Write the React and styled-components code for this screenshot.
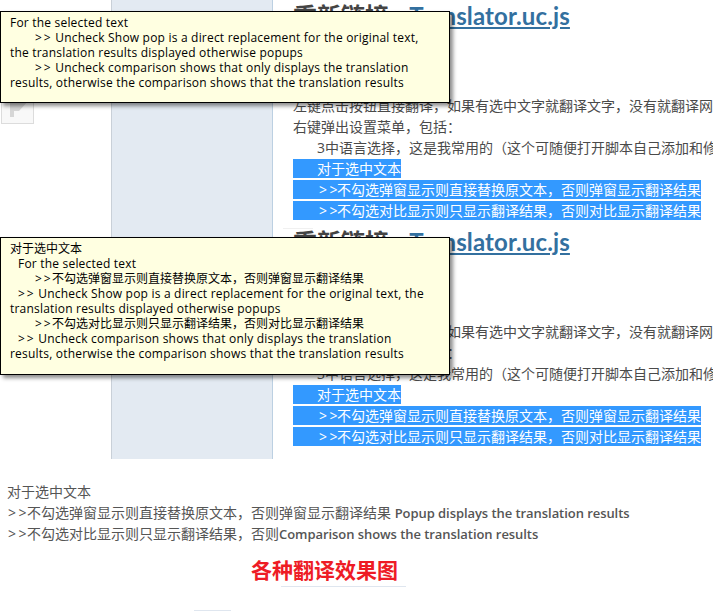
import React from 'react';
import styled, { createGlobalStyle } from 'styled-components';

const Global = createGlobalStyle`
  html, body { margin: 0; padding: 0; background: #fff; }
  body {
    width: 713px;
    height: 613px;
    overflow: hidden;
    font-family: "Open Sans", "Noto Sans CJK SC", sans-serif;
    font-size: 14px;
    color: #4a4a4a;
  }
`;

const Page = styled.div`
  position: relative;
  width: 713px;
  height: 613px;
  overflow: hidden;
`;

const Shot = styled.div`
  display: flex;
  height: 459px;
`;

const Gutter = styled.div`
  width: 111px;
  flex-shrink: 0;
  padding-top: 100px;
`;

const ShareBox = styled.div`
  width: 31px;
  height: 23px;
  margin-left: 1px;
  border: 1px solid #dcdcdc;
  border-top: none;
  background: #f8f8f8;
  color: #d6d6d6;
`;

const Sidebar = styled.div`
  width: 160px;
  flex-shrink: 0;
  background: #e3eaf2;
  border-left: 1px solid #c9d0d8;
  border-right: 1px solid #bcd0e2;
`;

const Content = styled.div`
  flex: 1;
  min-width: 0;
  padding-left: 20px;
  white-space: nowrap;
  overflow: hidden;
`;

const Post = styled.div`
  height: 226px;
`;

const Title = styled.h2`
  position: relative;
  margin: 0;
  line-height: 31px;
  font-size: 24px;
  font-weight: 700;
  color: #444;
  ${props => props.$faint && `
    &::before {
      content: "";
      position: absolute;
      left: -10px;
      top: 2px;
      width: 30px;
      height: 1px;
      background: #f0f0f0;
    }
  `}
`;

const TitleLink = styled.a`
  font-family: Lato, sans-serif;
  letter-spacing: 0.12px;
  color: #33709f;
  text-decoration: underline;
`;

const Body = styled.div`
  padding-top: 64px;
`;

const Line = styled.div`
  height: 21px;
  line-height: 21px;
  padding-left: ${props => (props.$indent ? '24px' : '0')};
`;

const PickedRows = styled.div`
  padding-top: 1px;
`;

const Picked = styled.div`
  width: ${props => (props.$short ? '108px' : '408px')};
  height: 19px;
  margin-bottom: 2px;
  line-height: 19px;
  padding-left: 24px;
  box-sizing: border-box;
  background: #3399ff;
  color: #fff;
`;

const Chevrons = styled.span`
  display: inline-block;
  box-sizing: border-box;
  width: ${props => props.$width}px;
  padding-left: ${props => props.$inset || 0}px;
  text-indent: 0;
  letter-spacing: ${props => props.$gap}px;
`;

const Tooltip = styled.div`
  position: absolute;
  left: 0;
  top: ${props => props.$top}px;
  width: 450px;
  height: ${props => props.$height}px;
  box-sizing: border-box;
  padding: 3px 14px 3px 9px;
  background: #ffffe1;
  border: 1px solid #000;
  box-shadow: 3px 3px 4px rgba(0, 0, 0, 0.45);
  font-size: 12px;
  line-height: 15px;
  letter-spacing: 0.2px;
  color: #000;
`;

const TipLine = styled.div`
  text-indent: ${props => props.$indent || 0}px;
`;

const TipCjk = styled.span`
  letter-spacing: 0;
`;

const Notes = styled.div`
  padding: 22px 0 0 7px;
`;

const Note = styled.div`
  height: 21px;
  line-height: 21px;
  font-size: 14px;
  color: #555;
  white-space: nowrap;
`;

const NoteLatin = styled.span`
  font-size: 13px;
  font-weight: 600;
  letter-spacing: -0.06px;
`;

const Caption = styled.div`
  margin-top: 12px;
  padding-left: 251px;
  font-size: 21px;
  line-height: 28px;
  font-weight: 700;
  color: #ee1c25;
`;

const Rule = styled.div`
  width: 125px;
  height: 1px;
  margin: 2px 0 0 281px;
  background: #dfe6ef;
`;

const Stub = styled.div`
  width: 37px;
  height: 1px;
  margin: 23px 0 0 194px;
  background: #dfe6ef;
`;

const ShareIcon = () => (
  <svg width="31" height="23" viewBox="0 0 31 23" style={{ display: 'block' }}>
    <path d="M8 0h4v17H8zM12 0h15l-10 11h-5z" fill="currentColor" />
  </svg>
);

const BodyChevrons = () => <Chevrons $width={20} $gap={2.5} $inset={2}>&gt;&gt;</Chevrons>;
const NoteChevrons = () => <Chevrons $width={20} $gap={2.5} $inset={1}>&gt;&gt;</Chevrons>;
const TipChevrons = () => <Chevrons $width={17} $gap={2}>&gt;&gt;</Chevrons>;

const PostBlock = ({ faint }) => (
  <Post>
    <Title $faint={faint}>
      重新链接 - <TitleLink>Translator.uc.js</TitleLink>
    </Title>
    <Body>
      <Line>左键点击按钮直接翻译，如果有选中文字就翻译文字，没有就翻译网页</Line>
      <Line>右键弹出设置菜单，包括：</Line>
      <Line $indent>3中语言选择，这是我常用的（这个可随便打开脚本自己添加和修改）</Line>
      <PickedRows>
        <Picked $short>对于选中文本</Picked>
        <Picked><BodyChevrons />不勾选弹窗显示则直接替换原文本，否则弹窗显示翻译结果</Picked>
        <Picked><BodyChevrons />不勾选对比显示则只显示翻译结果，否则对比显示翻译结果</Picked>
      </PickedRows>
    </Body>
  </Post>
);

export default function App() {
  return (
    <Page>
      <Global />
      <Shot>
        <Gutter>
          <ShareBox><ShareIcon /></ShareBox>
        </Gutter>
        <Sidebar />
        <Content>
          <PostBlock />
          <PostBlock faint />
        </Content>
      </Shot>
      <Notes>
        <Note>对于选中文本</Note>
        <Note><NoteChevrons />不勾选弹窗显示则直接替换原文本，否则弹窗显示翻译结果 <NoteLatin>Popup displays the translation results</NoteLatin></Note>
        <Note><NoteChevrons />不勾选对比显示则只显示翻译结果，否则<NoteLatin>Comparison shows the translation results</NoteLatin></Note>
      </Notes>
      <Caption>各种翻译效果图</Caption>
      <Rule />
      <Stub />
      <Tooltip $top={11} $height={92}>
        <TipLine>For the selected text</TipLine>
        <TipLine $indent={25}><TipChevrons /> Uncheck Show pop is a direct replacement for the original text, the translation results displayed otherwise popups</TipLine>
        <TipLine $indent={25}><TipChevrons /> Uncheck comparison shows that only displays the translation results, otherwise the comparison shows that the translation results</TipLine>
      </Tooltip>
      <Tooltip $top={237} $height={138}>
        <TipLine><TipCjk>对于选中文本</TipCjk></TipLine>
        <TipLine $indent={8}>For the selected text</TipLine>
        <TipLine $indent={25}><TipChevrons /><TipCjk>不勾选弹窗显示则直接替换原文本，否则弹窗显示翻译结果</TipCjk></TipLine>
        <TipLine $indent={8}><TipChevrons /> Uncheck Show pop is a direct replacement for the original text, the translation results displayed otherwise popups</TipLine>
        <TipLine $indent={25}><TipChevrons /><TipCjk>不勾选对比显示则只显示翻译结果，否则对比显示翻译结果</TipCjk></TipLine>
        <TipLine $indent={8}><TipChevrons /> Uncheck comparison shows that only displays the translation results, otherwise the comparison shows that the translation results</TipLine>
      </Tooltip>
    </Page>
  );
}
